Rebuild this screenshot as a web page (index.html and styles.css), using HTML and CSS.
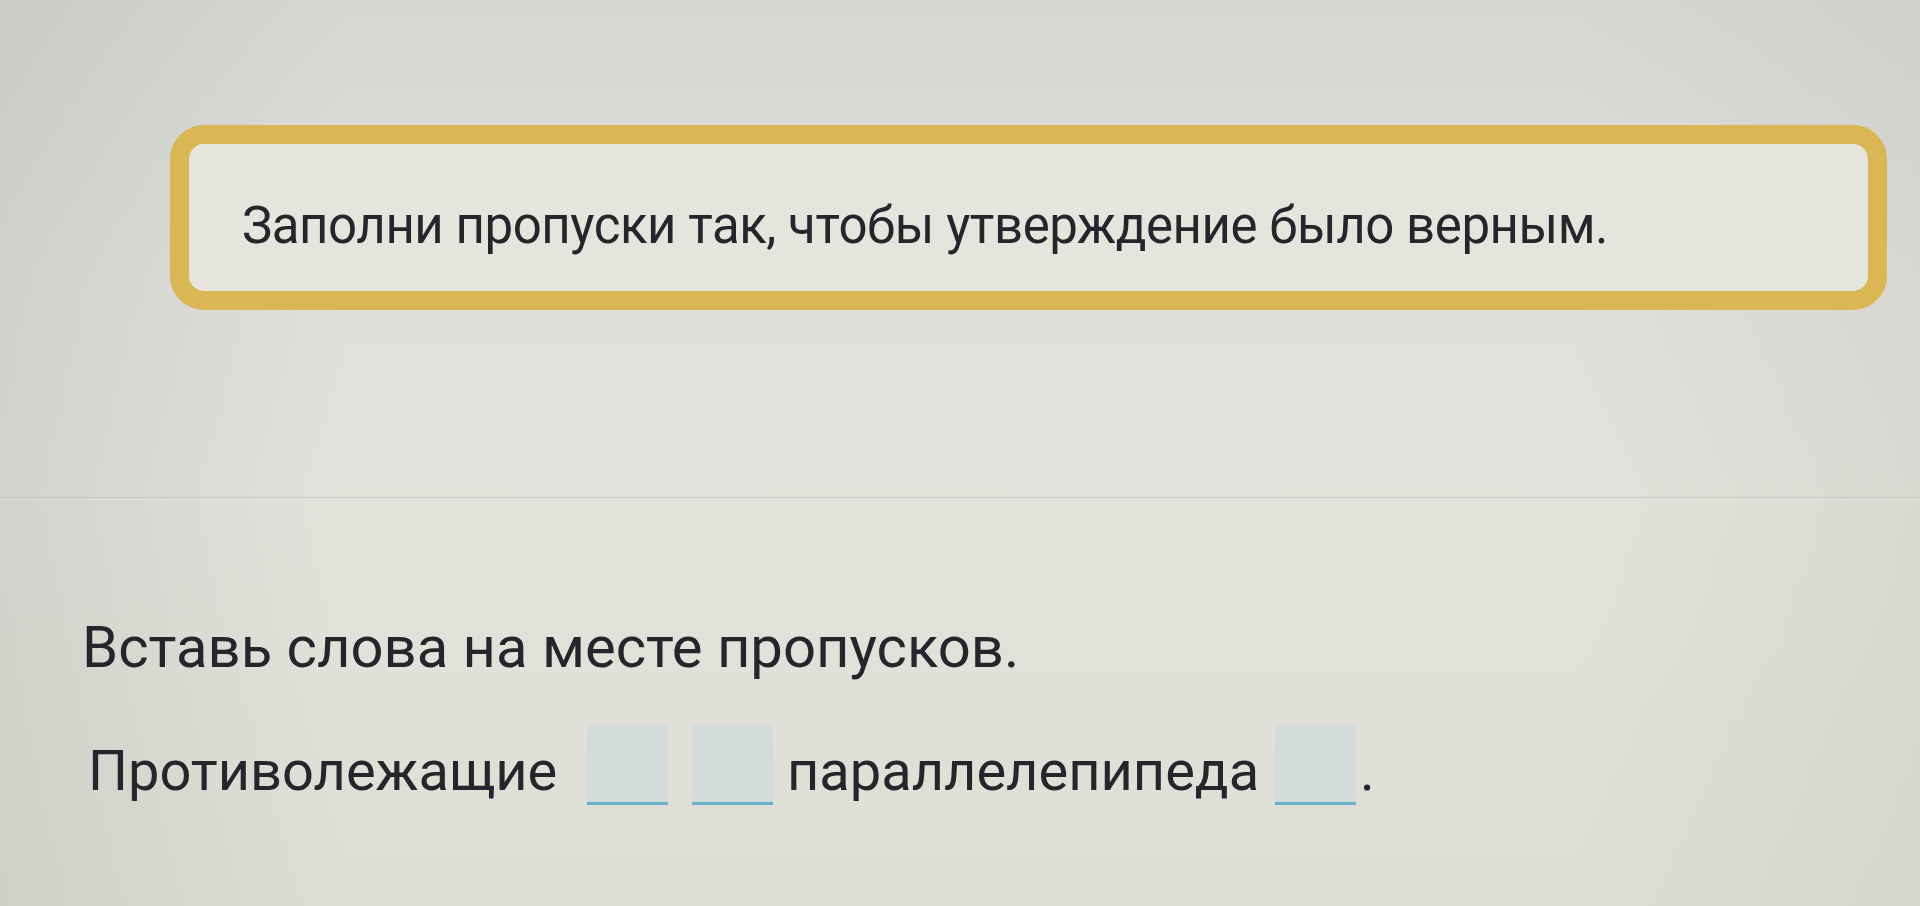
FILE: index.html
```html
<!DOCTYPE html>
<html lang="ru">
<head>
<meta charset="utf-8">
<title>Задание</title>
<link rel="stylesheet" href="styles.css">
</head>
<body>
<main class="page">
  <section class="task-box">
    <p class="task-text">Заполни пропуски так, чтобы утверждение было верным.</p>
  </section>
  <hr class="divider">
  <section class="exercise">
    <p class="instruction">Вставь слова на месте пропусков.</p>
    <p class="sentence">Противолежащие <span class="blank blank-first"></span> <span class="blank"></span> параллелепипеда <span class="blank blank-last"></span>.</p>
  </section>
</main>
</body>
</html>
```

FILE: styles.css
```css
html, body {
  margin: 0;
  padding: 0;
  height: 100%;
}

body {
  background:
    linear-gradient(90deg, rgba(180,182,175,0.35) 0%, rgba(255,255,255,0) 18%, rgba(255,255,255,0) 82%, rgba(190,190,182,0.25) 100%),
    linear-gradient(180deg, #d5d7d2 0%, #dfe0da 30%, #e3e3dc 55%, #dfded5 100%);
  font-family: Roboto, "Liberation Sans", Arial, sans-serif;
  color: #25262b;
  overflow: hidden;
}

.page {
  padding-top: 125px;
  height: 906px;
  box-sizing: border-box;
}

.task-box {
  margin-left: 170px;
  margin-right: 33px;
  height: 185px;
  box-sizing: border-box;
  border: 19px solid #dbb655;
  border-radius: 34px;
  background: #e5e4dd;
  display: flex;
  align-items: center;
  padding-left: 53px;
  padding-top: 16px;
}

.task-text {
  margin: 0;
  font-size: 51px;
  line-height: 51px;
  letter-spacing: -0.45px;
}

.divider {
  margin: 187px 0 0 0;
  border: 0;
  height: 1px;
  background: rgba(170,172,165,0.4);
}

.exercise {
  padding-left: 82px;
}

.instruction {
  margin: 120px 0 0 0;
  font-size: 58px;
  line-height: 58px;
}

.sentence {
  margin: 49px 0 0 6px;
  font-size: 56px;
  line-height: 56px;
}

.blank {
  display: inline-block;
  width: 81px;
  height: 80px;
  box-sizing: border-box;
  background: #d3dcdb;
  border-bottom: 3px solid #66b2c8;
  vertical-align: -15px;
  margin-left: 10px;
}

.blank-first {
  margin-left: 16px;
}

.blank-last {
  margin-left: 2px;
  margin-right: 4px;
}
```
